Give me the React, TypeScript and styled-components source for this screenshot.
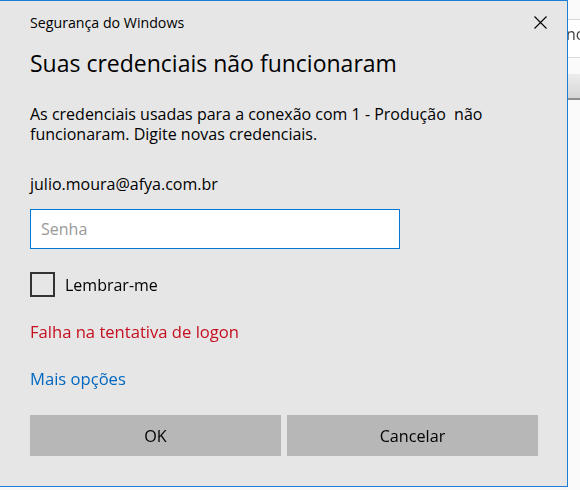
import React from 'react'
import styled, { createGlobalStyle } from 'styled-components'

const GlobalStyle = createGlobalStyle`
    html, body {
        margin: 0;
        padding: 0;
        background: #f7f7f7;
        overflow: hidden;
    }
    body {
        font-family: "Open Sans", "Noto Sans", "Liberation Sans", sans-serif;
    }
`

const Screen = styled.div`
    width: 580px;
    height: 490px;
    display: flex;
    align-items: flex-start;
    background: #f7f7f7;
`

const Dialog = styled.div`
    width: 567px;
    height: 485px;
    flex: none;
    box-sizing: content-box;
    background: #e6e6e6;
    border-top: 1px solid #1a7fd4;
    border-right: 1px solid #1a7fd4;
    border-bottom: 1px solid #1a7fd4;
    display: flex;
    flex-direction: column;
    color: #000;
`

const TitleBar = styled.div`
    height: 44px;
    display: flex;
    align-items: center;
    justify-content: space-between;
    padding: 0 20px 0 30px;
`

const Caption = styled.span`
    font-size: 14.2px;
    color: #000;
    margin-top: -2px;
`

const CloseButton = styled.button`
    width: 14px;
    height: 14px;
    padding: 0;
    border: 0;
    background: transparent;
    display: flex;
    align-items: center;
    justify-content: center;
    margin-top: -1px;
`

const Body = styled.div`
    display: flex;
    flex-direction: column;
    padding: 0 29px 0 30px;
`

const Heading = styled.h1`
    margin: 0;
    font-size: 23px;
    font-weight: 400;
    line-height: 36px;
    color: #000;
`

const Message = styled.p`
    margin: 23px 0 0;
    font-size: 16px;
    line-height: 20px;
    width: 480px;
`

const Account = styled.div`
    margin-top: 30px;
    font-size: 16px;
    line-height: 20px;
`

const PasswordInput = styled.input`
    margin-top: 15px;
    width: 370px;
    height: 40px;
    box-sizing: border-box;
    border: 1px solid #0078d7;
    background: #fff;
    padding: 0 10px;
    font-family: inherit;
    font-size: 16px;
    outline: none;
    caret-color: #000;

    &::placeholder {
        color: #999;
    }
`

const CheckRow = styled.label`
    margin-top: 23px;
    display: flex;
    align-items: center;
    gap: 10px;
    font-size: 16px;
`

const CheckBox = styled.span`
    width: 25px;
    height: 25px;
    box-sizing: border-box;
    border: 2px solid #333;
    background: #e6e6e6;
`

const StatusText = styled.div<{ $tone: 'error' | 'link' }>`
    font-size: 16.6px;
    line-height: 22px;
    color: ${({ $tone }) => ($tone === 'error' ? '#c50f1f' : '#0067c0')};
    margin-top: ${({ $tone }) => ($tone === 'error' ? '24px' : '25px')};
`

const ButtonRow = styled.div`
    margin-top: 25px;
    display: flex;
    gap: 6px;
`

const Button = styled.button`
    width: 251px;
    height: 41px;
    border: 0;
    background: #b7b7b7;
    font-family: inherit;
    font-size: 16.2px;
    color: #000;
    padding: 0;
`

const Backdrop = styled.div`
    flex: 1;
    height: 100%;
    display: flex;
    flex-direction: column;
    background: #fafafa;
    overflow: hidden;
`

const BackdropHeader = styled.div`
    margin-top: 19px;
    height: 39px;
    box-sizing: border-box;
    padding-top: 4px;
    border-top: 1px solid #d9d9d9;
    border-bottom: 1px solid #d9d9d9;
    background: #fff;
    font-size: 16px;
    line-height: 20px;
    color: #444;
    white-space: nowrap;
    text-indent: -2px;
`

const BackdropBand = styled.div`
    margin-top: 16px;
    height: 24px;
    background: linear-gradient(#ececec, #d6d6d6);
    border-bottom: 2px solid #8e8e8e;
`

export default function App() {
    return (
        <Screen>
            <GlobalStyle />
            <Dialog>
                <TitleBar>
                    <Caption>Segurança do Windows</Caption>
                    <CloseButton aria-label="Fechar">
                        <svg width="13" height="13" viewBox="0 0 13 13">
                            <path d="M0.5 0.5 L12.5 12.5 M12.5 0.5 L0.5 12.5" stroke="#000" strokeWidth="1.1" />
                        </svg>
                    </CloseButton>
                </TitleBar>
                <Body>
                    <Heading>Suas credenciais não funcionaram</Heading>
                    <Message>
                        As credenciais usadas para a conexão com 1 - Produção&nbsp; não funcionaram. Digite novas credenciais.
                    </Message>
                    <Account>julio.moura@afya.com.br</Account>
                    <PasswordInput type="password" placeholder="Senha" autoFocus />
                    <CheckRow>
                        <CheckBox />
                        Lembrar-me
                    </CheckRow>
                    <StatusText $tone="error">Falha na tentativa de logon</StatusText>
                    <StatusText $tone="link">Mais opções</StatusText>
                    <ButtonRow>
                        <Button>OK</Button>
                        <Button>Cancelar</Button>
                    </ButtonRow>
                </Body>
            </Dialog>
            <Backdrop>
                <BackdropHeader>nc</BackdropHeader>
                <BackdropBand />
            </Backdrop>
        </Screen>
    )
}
